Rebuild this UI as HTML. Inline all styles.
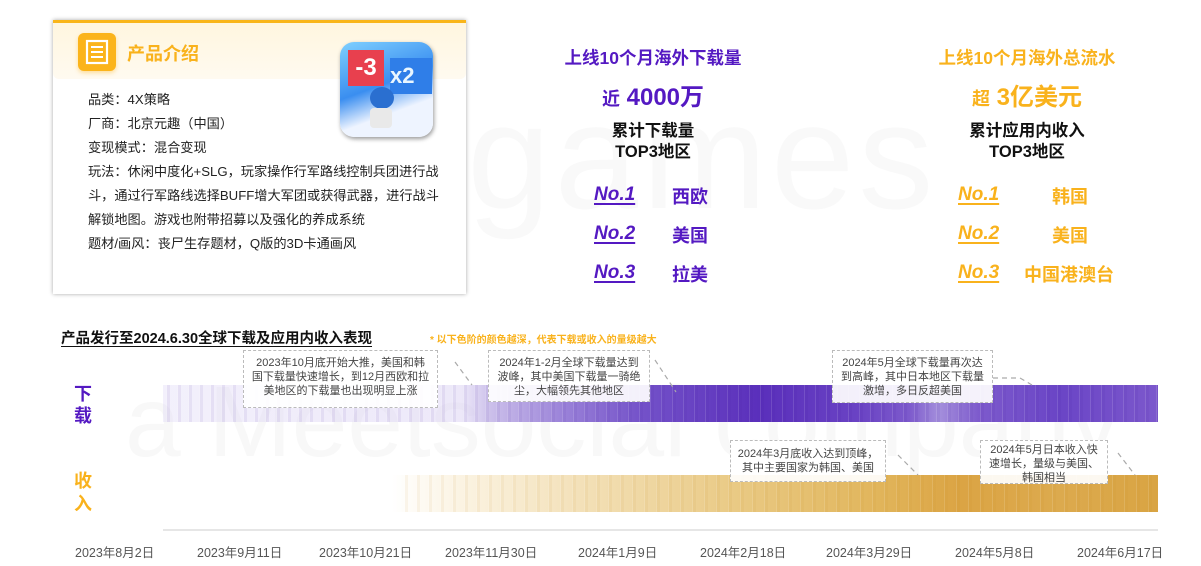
<!DOCTYPE html>
<html><head><meta charset="utf-8"><style>
*{margin:0;padding:0;box-sizing:border-box}
body{width:1201px;height:566px;background:#fff;position:relative;overflow:hidden;font-family:"Liberation Sans","Noto Sans CJK SC",sans-serif;color:#222}
.a{position:absolute}
.card{left:53px;top:20px;width:413px;height:274px;background:#fff;border-top:3px solid #f9b51a;box-shadow:0 0 4px rgba(0,0,0,.35)}
.band{left:0;top:0;width:100%;height:56px;background:linear-gradient(#fff6df,#fffaf0);border-radius:0 0 6px 6px}
.info{left:35px;font-size:13.2px;color:#222;line-height:24px;width:358px}
.pu{color:#5419c2}.or{color:#f9b21c}
.ctr{text-align:center;font-weight:bold}
.no{font-style:italic;font-weight:bold;font-size:19px;text-decoration:underline;text-decoration-thickness:1.5px;text-underline-offset:3px}
.rg{font-weight:bold;font-size:18px}
.box{position:absolute;background:rgba(255,255,255,.92);border:1.5px dashed #bbb;font-size:11px;color:#444;text-align:center;line-height:14px;padding-top:5px}
.date{position:absolute;top:542px;font-size:12.5px;color:#555}
</style></head><body>
<div class="a" style="left:230px;top:70px;font-size:150px;color:#f9f9f9;font-weight:300;letter-spacing:4px">Ae/games</div>
<div class="a" style="left:125px;top:365px;font-size:100px;color:#f8f8f8;white-space:nowrap">a Meetsocial company</div>

<div class="a card">
 <div class="a band"></div>
 <div class="a" style="left:25px;top:10px;width:38px;height:38px;background:#fbb41b;border-radius:6px;box-shadow:0 2px 4px rgba(250,180,30,.4)">
  <svg width="38" height="38" viewBox="0 0 38 38"><rect x="9" y="8" width="20" height="22" fill="none" stroke="#fff" stroke-width="2.2"/><path d="M13 14h12M13 19h12M13 24h12" stroke="#fff" stroke-width="2"/></svg>
 </div>
 <div class="a or" style="left:74px;top:17px;font-size:18px;font-weight:bold">产品介绍</div>
 <div class="a" style="left:287px;top:19px;width:93px;height:95px;border-radius:14px;background:linear-gradient(160deg,#7fd0ff,#3a8ef0 45%,#eef4ff 70%);box-shadow:1px 2px 4px rgba(0,0,0,.4);overflow:hidden">
  <div class="a" style="left:8px;top:8px;width:36px;height:36px;background:#e8404e;color:#fff;font-weight:bold;font-size:24px;text-align:center;line-height:36px">-3</div>
  <div class="a" style="left:50px;top:16px;width:42px;height:36px;background:#2f7ee8;color:#e9f6ff;font-weight:bold;font-size:22px;line-height:36px">x2</div>
  <div class="a" style="left:30px;top:45px;width:24px;height:22px;border-radius:50%;background:#2a6fd0"></div>
  <div class="a" style="left:30px;top:66px;width:22px;height:20px;background:#e9e9e9;border-radius:4px"></div>
 </div>
 <div class="a info" style="top:65px">品类：4X策略<br>厂商：北京元趣（中国）<br>变现模式：混合变现<br>玩法：休闲中度化+SLG，玩家操作行军路线控制兵团进行战斗，通过行军路线选择BUFF增大军团或获得武器，进行战斗解锁地图。游戏也附带招募以及强化的养成系统<br>题材/画风：丧尸生存题材，Q版的3D卡通画风</div>
</div>

<div class="a ctr pu" style="left:523px;top:45px;width:260px;font-size:17.5px">上线10个月海外下载量</div>
<div class="a ctr pu" style="left:523px;top:77px;width:260px;font-size:24px"><span style="font-size:18px">近</span> 4000万</div>
<div class="a ctr" style="left:523px;top:121px;width:260px;font-size:16.5px;line-height:21px;color:#111">累计下载量<br>TOP3地区</div>
<div class="a no pu" style="left:594px;top:184px">No.1</div><div class="a rg pu" style="left:672px;top:183px">西欧</div>
<div class="a no pu" style="left:594px;top:223px">No.2</div><div class="a rg pu" style="left:672px;top:222px">美国</div>
<div class="a no pu" style="left:594px;top:262px">No.3</div><div class="a rg pu" style="left:672px;top:261px">拉美</div>

<div class="a ctr or" style="left:897px;top:45px;width:260px;font-size:17.5px">上线10个月海外总流水</div>
<div class="a ctr or" style="left:897px;top:77px;width:260px;font-size:24px"><span style="font-size:18px">超</span> 3亿美元</div>
<div class="a ctr" style="left:897px;top:121px;width:260px;font-size:16.5px;line-height:21px;color:#111">累计应用内收入<br>TOP3地区</div>
<div class="a no or" style="left:958px;top:184px">No.1</div><div class="a rg or" style="left:1052px;top:183px">韩国</div>
<div class="a no or" style="left:958px;top:223px">No.2</div><div class="a rg or" style="left:1052px;top:222px">美国</div>
<div class="a no or" style="left:958px;top:262px">No.3</div><div class="a rg or" style="left:1024px;top:261px">中国港澳台</div>

<div class="a" style="left:61px;top:327px;font-size:14.5px;font-weight:bold;color:#111;text-decoration:underline;text-underline-offset:3px">产品发行至2024.6.30全球下载及应用内收入表现</div>
<div class="a or" style="left:430px;top:331px;font-size:10px;font-weight:bold">* 以下色阶的颜色越深，代表下载或收入的量级越大</div>

<div class="a pu" style="left:74px;top:383px;font-size:18px;font-weight:bold;line-height:22px">下<br>载</div>
<div class="a or" style="left:74px;top:470px;font-size:18px;font-weight:bold;line-height:23px">收<br>入</div>

<div class="a" style="left:163px;top:385px;width:995px;height:37px;background:linear-gradient(90deg,rgba(220,212,245,.35) 0%,rgba(215,205,242,.45) 30%,#cbbfea 33%,#9c84d9 40%,#7452c9 48%,#5a2fbb 60%,#6a43c4 70%,#7d5acc 75%,#a48fdc 78%,#7d5acc 82%,#6a45c6 90%,#7c58cc 100%)"></div>
<div class="a" style="left:163px;top:385px;width:995px;height:37px;background:repeating-linear-gradient(90deg,rgba(255,255,255,0) 0 3px,rgba(255,255,255,.12) 3px 4px,rgba(60,20,150,.07) 4px 7px,rgba(255,255,255,0) 7px 11px)"></div>
<div class="a" style="left:163px;top:475px;width:995px;height:37px;background:linear-gradient(90deg,rgba(255,255,255,0) 0%,rgba(255,255,255,0) 23%,#fbf3e2 30%,#f1dcae 45%,#e9c983 58%,#e1b55b 72%,#dba444 80%,#dcaa4e 90%,#d9a443 100%)"></div>
<div class="a" style="left:400px;top:475px;width:758px;height:37px;background:repeating-linear-gradient(90deg,rgba(255,255,255,0) 0 4px,rgba(255,255,255,.12) 4px 5px,rgba(190,130,20,.07) 5px 8px,rgba(255,255,255,0) 8px 12px)"></div>

<svg class="a" style="left:0;top:0" width="1201" height="566">
<g stroke="#aaa" stroke-width="1.2" stroke-dasharray="5,4" fill="none">
<path d="M455 362 L472 385"/><path d="M655 360 L676 392"/><path d="M993 378 L1020 378 L1032 385"/><path d="M898 455 L918 475"/><path d="M1118 453 L1135 475"/>
</g>
<line x1="163" y1="530" x2="1158" y2="530" stroke="#ddd" stroke-width="1.5"/>
</svg>

<div class="box" style="left:243px;top:350px;width:195px;height:58px">2023年10月底开始大推，美国和韩<br>国下载量快速增长，到12月西欧和拉<br>美地区的下载量也出现明显上涨</div>
<div class="box" style="left:488px;top:350px;width:162px;height:52px">2024年1-2月全球下载量达到<br>波峰，其中美国下载量一骑绝<br>尘，大幅领先其他地区</div>
<div class="box" style="left:832px;top:350px;width:161px;height:53px">2024年5月全球下载量再次达<br>到高峰，其中日本地区下载量<br>激增，多日反超美国</div>
<div class="box" style="left:730px;top:440px;width:156px;height:42px;padding-top:6px">2024年3月底收入达到顶峰，<br>其中主要国家为韩国、美国</div>
<div class="box" style="left:980px;top:440px;width:128px;height:44px;padding-top:2px">2024年5月日本收入快<br>速增长，量级与美国、<br>韩国相当</div>

<div class="date" style="left:75px">2023年8月2日</div>
<div class="date" style="left:197px">2023年9月11日</div>
<div class="date" style="left:319px">2023年10月21日</div>
<div class="date" style="left:445px">2023年11月30日</div>
<div class="date" style="left:578px">2024年1月9日</div>
<div class="date" style="left:700px">2024年2月18日</div>
<div class="date" style="left:826px">2024年3月29日</div>
<div class="date" style="left:955px">2024年5月8日</div>
<div class="date" style="left:1077px">2024年6月17日</div>
</body></html>
